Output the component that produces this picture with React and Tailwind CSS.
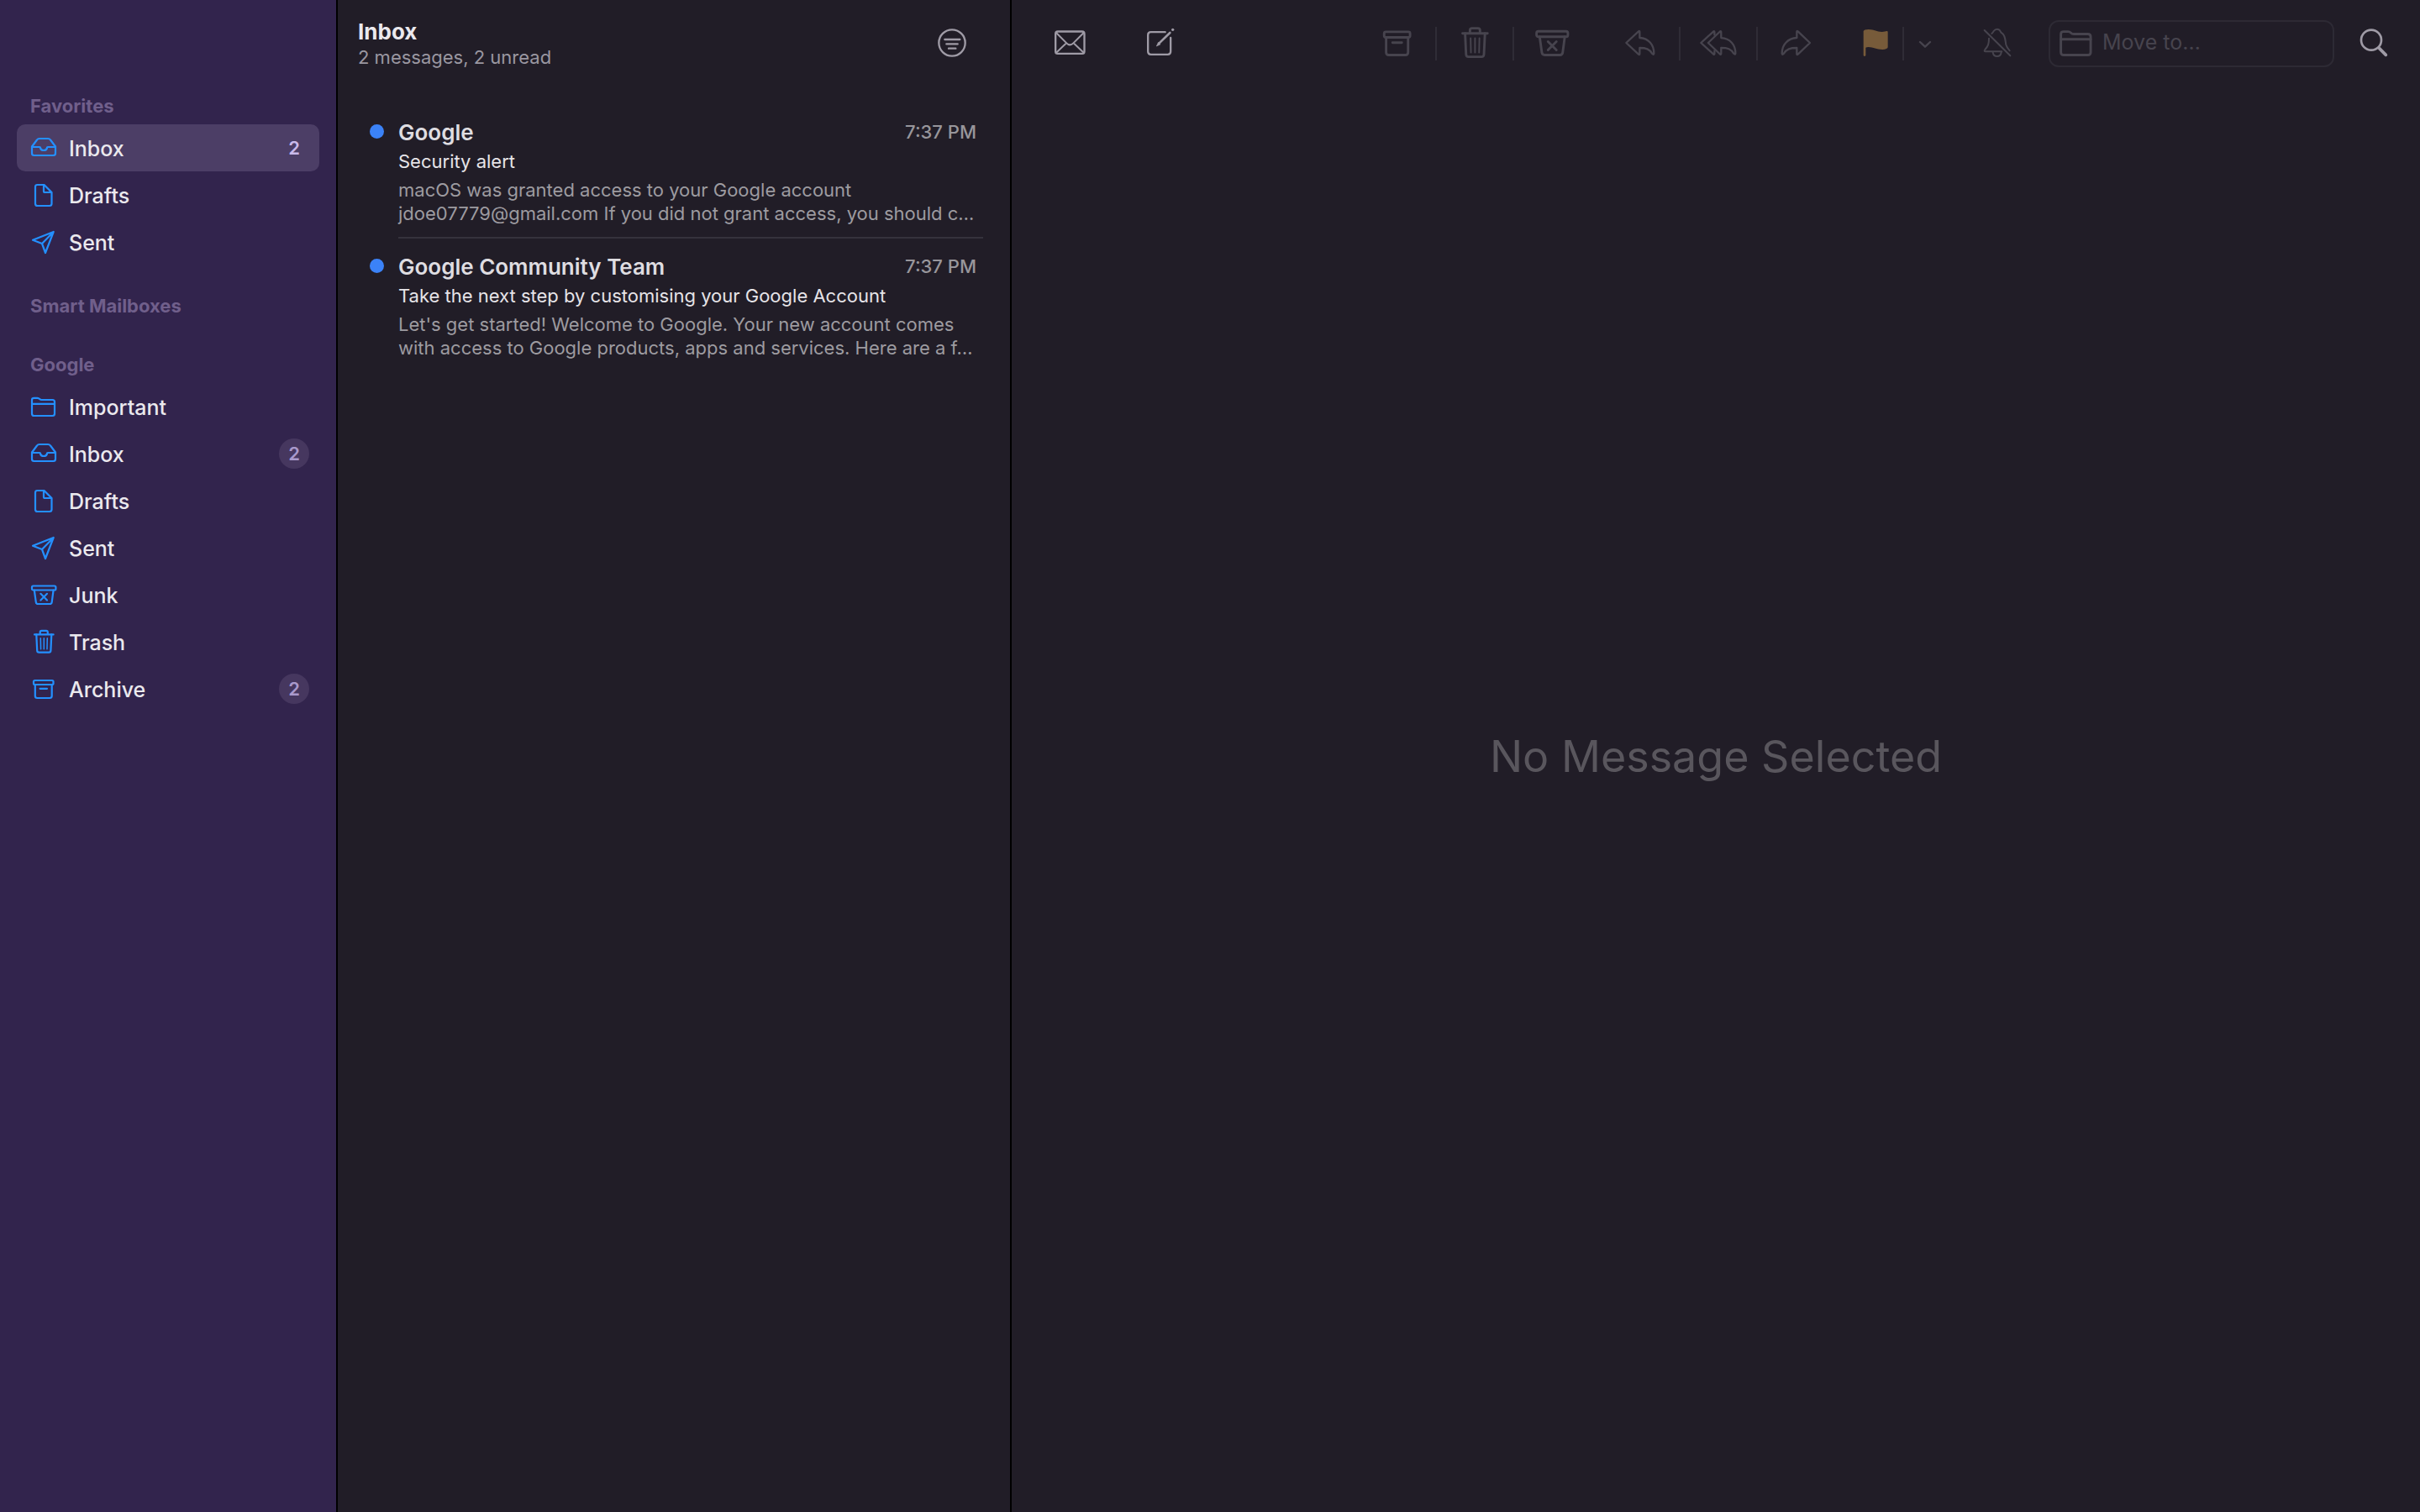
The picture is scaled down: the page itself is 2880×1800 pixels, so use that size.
import React from "react";

function SideIcon({ size = "size-8", children }) {
  return (
    <svg
      viewBox="0 0 32 32"
      className={`${size} shrink-0`}
      fill="none"
      stroke="currentColor"
      strokeWidth="2.2"
      strokeLinecap="round"
      strokeLinejoin="round"
      aria-hidden="true"
    >
      {children}
    </svg>
  );
}

const InboxIcon = (props) => (
  <SideIcon {...props}>
    <path d="M2 15V22.5Q2 25 4.5 25H27.5Q30 25 30 22.5V14.5L24 6.5Q23 5 21 5H11Q9 5 8 6.5L2 14.5Z" />
    <path d="M2 15H11Q12 15 12 16Q12.5 19 16 19Q19.5 19 20 16Q20 15 21 15H30" />
  </SideIcon>
);

const FileIcon = (props) => (
  <SideIcon {...props}>
    <path d="M8.5 4H16.5L25.5 13V26.5Q25.5 29 23 29H8.5Q6 29 6 26.5V6.5Q6 4 8.5 4Z" />
    <path d="M16 4V11.5Q16 13 17.5 13H25" />
  </SideIcon>
);

const PlaneIcon = (props) => (
  <SideIcon {...props}>
    <path d="M27.7 4L3 13.7L14 18L18 29L27.7 4L14 18" />
  </SideIcon>
);

const FolderIcon = (props) => (
  <SideIcon {...props}>
    <path d="M2 24.5V8Q2 5.8 4.5 5.8H8.5Q10 5.8 11.2 7Q12.2 8 13.5 8H26.5Q29 8 29 10.5V24.5Q29 27 26.5 27H4.5Q2 27 2 24.5Z" />
    <path d="M2 12.8H29" />
  </SideIcon>
);

const JunkIcon = (props) => (
  <SideIcon {...props}>
    <rect x="2" y="5.5" width="28.4" height="5" rx="1.6" />
    <path d="M4.8 10.5L6.8 24.8Q7.1 27 9.3 27H23.2Q25.4 27 25.7 24.8L27.6 10.5" />
    <path d="M12.4 14.8L20 22.5M20 14.8L12.4 22.5" />
  </SideIcon>
);

const TrashIcon = (props) => (
  <SideIcon {...props}>
    <path d="M11.7 7V4.6Q11.7 2.8 13.5 2.8H19Q20.8 2.8 20.8 4.6V7" />
    <path d="M5 7.4H27.6" />
    <path d="M7.3 7.4L8.2 26.5Q8.3 28.7 10.4 28.7H22.2Q24.3 28.7 24.4 26.5L25.3 7.4" />
    <path strokeWidth="1.5" d="M12.3 11.8L12.6 24.8M16.3 11.8V24.8M20.3 11.8L20 24.8" />
  </SideIcon>
);

const ArchiveIcon = (props) => (
  <SideIcon {...props}>
    <rect x="4" y="6" width="23.5" height="5" rx="1.5" />
    <path d="M5.8 11V24.5Q5.8 27 8.3 27H23.2Q25.7 27 25.7 24.5V11" />
    <path d="M11.6 15.8H20" />
  </SideIcon>
);

function BarIcon({ viewBox, size = "size-11", children }) {
  return (
    <svg
      viewBox={viewBox}
      className={`${size} shrink-0`}
      fill="none"
      stroke="currentColor"
      strokeWidth="7"
      strokeLinecap="round"
      strokeLinejoin="round"
      aria-hidden="true"
    >
      {children}
    </svg>
  );
}

const FilterIcon = () => (
  <BarIcon viewBox="332 87 132 132">
    <circle cx="398" cy="153" r="47" />
    <path d="M372 141H426M378 157H418M386 173H411" />
  </BarIcon>
);

const MailIcon = () => (
  <BarIcon viewBox="756 87 132 132">
    <rect x="768.5" y="112.5" width="103" height="79" rx="8" />
    <path strokeWidth="6" d="M771 117L808 154Q820 166 832 154L869 117M771 188L804 157M869 188L836 157" />
  </BarIcon>
);

const ComposeIcon = () => (
  <BarIcon viewBox="1080 87 132 132">
    <path d="M1160 114.500H1109Q1098.500 114.500 1098.500 125V184Q1098.500 194.500 1109 194.500H1169Q1179.500 194.500 1179.500 184V135" />
    <path strokeWidth="8" d="M1138 155L1177 117" />
    <path fill="currentColor" strokeWidth="2" d="M1135 152L1129 165L1142 159Z" />
    <circle cx="1187" cy="106" r="5" fill="currentColor" stroke="none" />
  </BarIcon>
);

const ReplyIcon = () => (
  <BarIcon viewBox="992 87 132 132">
    <path d="M1005 153L1049 112Q1053 109 1053 114V135C1086 137 1104 160 1104 191Q1103 197 1098 192C1088 175 1076 171 1053 171V192Q1053 197 1049 194Z" />
  </BarIcon>
);

const ReplyAllIcon = () => (
  <BarIcon viewBox="68 87 134 132">
    <path d="M98 153L141 112Q145 109 145 114V135C178 137 197 160 197 191Q196 197 191 192C181 175 168 171 145 171V192Q145 197 141 194Z" />
    <path d="M121 124V114Q121 109 117 112L72 153L117 194Q121 197 121 192V182" />
  </BarIcon>
);

const ForwardIcon = () => (
  <BarIcon viewBox="346 87 132 132">
    <path d="M463 153L420 112Q416 109 416 114V135C383 137 363 160 363 191Q364 197 369 192C379 175 393 171 416 171V192Q416 197 420 194Z" />
  </BarIcon>
);

const FlagIcon = () => (
  <BarIcon viewBox="628 87 132 132">
    <path
      fill="currentColor"
      stroke="none"
      d="M654 111Q656 105 672 105C695 105 700 114 720 114Q732 113 737 111Q741 110 741 115V169Q740 176 722 177C700 177 690 168 672 168Q665 168 662 170V198Q658 204 654 198Z"
    />
  </BarIcon>
);

const ChevronIcon = () => (
  <BarIcon viewBox="840 120 66 66" size="size-[22px]">
    <path d="M855 150L873 167L891 150" />
  </BarIcon>
);

const BellOffIcon = () => (
  <BarIcon viewBox="1066 87 132 132">
    <g strokeWidth="6">
      <path d="M1086 108L1178 199" />
      <path d="M1112 120Q1117 116 1119 111Q1124 104 1131 104Q1139 104 1143 112Q1145 117 1149 119C1162 128 1160 147 1163 160Q1166 170 1176 181" />
      <path d="M1102 137C1102 158 1099 165 1088 177Q1083 184 1090 184H1148" />
      <path d="M1116 187Q1118 201 1131 201Q1144 201 1146 187" />
    </g>
  </BarIcon>
);

const SearchIcon = () => (
  <BarIcon viewBox="1149 87 132 132">
    <circle cx="1206" cy="143" r="36" strokeWidth="8" />
    <path strokeWidth="11" d="M1235 173L1258 196" />
  </BarIcon>
);

function MailboxRow({ icon: Icon, label, count, selected }) {
  return (
    <li>
      <button
        type="button"
        aria-current={selected ? "page" : undefined}
        className={`flex h-14 w-full items-center rounded-[10px] pl-4 pr-3 text-left ${
          selected ? "bg-[#4c3e66]" : ""
        }`}
      >
        <span className="text-[#2490ff]">
          <Icon />
        </span>
        <span className="ml-[14px] flex-1 pt-[2px] text-[25px] font-medium leading-8 text-[#ebe9ee]">{label}</span>
        {count && (
          <span
            className={`flex size-9 items-center justify-center rounded-full text-[22px] font-semibold ${
              selected ? "text-[#c9b9ea]" : "bg-[#46375f] text-[#a999cb]"
            }`}
          >
            {count}
          </span>
        )}
      </button>
    </li>
  );
}

function MailboxSection({ title, items = [] }) {
  return (
    <section>
      <h2 className="flex h-11 items-center pl-4 text-[22px] font-bold text-[#705f8b]">{title}</h2>
      {items.length > 0 && (
        <ul>
          {items.map((item) => (
            <MailboxRow key={item.label} {...item} />
          ))}
        </ul>
      )}
    </section>
  );
}

const favorites = [
  { icon: InboxIcon, label: "Inbox", count: 2, selected: true },
  { icon: FileIcon, label: "Drafts" },
  { icon: PlaneIcon, label: "Sent" },
];

const google = [
  { icon: FolderIcon, label: "Important" },
  { icon: InboxIcon, label: "Inbox", count: 2 },
  { icon: FileIcon, label: "Drafts" },
  { icon: PlaneIcon, label: "Sent" },
  { icon: JunkIcon, label: "Junk" },
  { icon: TrashIcon, label: "Trash" },
  { icon: ArchiveIcon, label: "Archive", count: 2 },
];

const messages = [
  {
    from: "Google",
    time: "7:37 PM",
    subject: "Security alert",
    preview: [
      "macOS was granted access to your Google account",
      "jdoe07779@gmail.com If you did not grant access, you should c…",
    ],
  },
  {
    from: "Google Community Team",
    time: "7:37 PM",
    subject: "Take the next step by customising your Google Account",
    preview: [
      "Let's get started! Welcome to Google. Your new account comes",
      "with access to Google products, apps and services. Here are a f…",
    ],
  },
];

function Message({ from, time, subject, preview, last }) {
  return (
    <li className="flex pl-[38px] pr-8">
      <span className="mt-6 size-[17px] shrink-0 rounded-full bg-[#3b82f7]" aria-label="Unread" />
      <article
        className={`ml-[17px] min-w-0 flex-1 border-b-2 pb-[14px] pt-4 ${
          last ? "border-transparent" : "border-[#35323c]"
        }`}
      >
        <div className="flex h-[34px] items-center justify-between pr-2">
          <h3 className="text-[26px] font-semibold text-[#dfdde1]">{from}</h3>
          <time className="text-[22px] font-medium text-[#98969b]">{time}</time>
        </div>
        <p className="whitespace-nowrap text-[22px] leading-9 text-[#e6e4e8]">{subject}</p>
        <p className="whitespace-nowrap pt-[2px] text-[22px] leading-7 text-[#9d9ba0]">
          {preview[0]}
          <br />
          {preview[1]}
        </p>
      </article>
    </li>
  );
}

function ToolButton({ label, width = "w-[90px]", color = "text-[#47444e]", disabled = true, children }) {
  return (
    <button
      type="button"
      aria-label={label}
      disabled={disabled}
      className={`flex h-14 items-center justify-center pb-[2px] ${width} ${color}`}
    >
      {children}
    </button>
  );
}

const Separator = () => <span className="h-10 w-[2px] bg-[#2f2c36]" />;

export default function App() {
  return (
    <div className="flex min-h-screen bg-[#211d27] font-['Inter',sans-serif]">
      <nav
        aria-label="Mailboxes"
        className="flex w-[402px] shrink-0 flex-col gap-[26px] border-r-2 border-black bg-[#32244d] px-5 pt-[104px]"
      >
        <MailboxSection title="Favorites" items={favorites} />
        <MailboxSection title="Smart Mailboxes" />
        <MailboxSection title="Google" items={google} />
      </nav>

      <section aria-label="Messages" className="w-[802px] shrink-0 border-r-2 border-black">
        <header className="flex h-[104px] items-center justify-between pl-6 pr-8">
          <div>
            <h1 className="text-[26px] font-bold leading-8 text-[#ebe9ee]">Inbox</h1>
            <p className="text-[22px] leading-7 text-[#9a97a1]">2 messages, 2 unread</p>
          </div>
          <ToolButton label="Filter" width="w-[74px]" color="text-[#9f9ba6]" disabled={false}>
            <FilterIcon />
          </ToolButton>
        </header>
        <ul className="pt-5">
          {messages.map((message, index) => (
            <Message key={message.from} {...message} last={index === messages.length - 1} />
          ))}
        </ul>
      </section>

      <main className="flex min-w-0 flex-1 flex-col">
        <div role="toolbar" aria-label="Message actions" className="flex h-[104px] items-center justify-between pl-6 pr-2">
          <div className="flex gap-4">
            <ToolButton label="Get new mail" width="w-[92px]" color="text-[#9f9ba6]" disabled={false}>
              <MailIcon />
            </ToolButton>
            <ToolButton label="New message" width="w-[92px]" color="text-[#9f9ba6]" disabled={false}>
              <ComposeIcon />
            </ToolButton>
          </div>
          <div className="flex items-center">
            <div className="flex items-center gap-4">
              <div className="flex items-center">
                <ToolButton label="Archive"><ArchiveIcon size="size-[42px]" /></ToolButton>
                <Separator />
                <ToolButton label="Delete"><TrashIcon size="size-[42px]" /></ToolButton>
                <Separator />
                <ToolButton label="Junk"><JunkIcon size="size-[42px]" /></ToolButton>
              </div>
              <div className="flex items-center">
                <ToolButton label="Reply"><ReplyIcon /></ToolButton>
                <Separator />
                <ToolButton label="Reply all"><ReplyAllIcon /></ToolButton>
                <Separator />
                <ToolButton label="Forward"><ForwardIcon /></ToolButton>
              </div>
              <div className="flex items-center">
                <ToolButton label="Flag" width="w-[66px]" color="text-[#775b3a]"><FlagIcon /></ToolButton>
                <Separator />
                <ToolButton label="Flag options" width="w-[50px]"><ChevronIcon /></ToolButton>
              </div>
              <ToolButton label="Mute"><BellOffIcon /></ToolButton>
              <label className="flex h-14 w-[340px] items-center rounded-xl border-2 border-[#2d2a34] pb-[2px] pl-[10px] text-[#47444e]">
                <FolderIcon size="size-[42px]" />
                <input
                  type="text"
                  disabled
                  aria-label="Move to"
                  placeholder="Move to…"
                  className="ml-[10px] w-0 min-w-0 flex-1 bg-transparent text-[25px] placeholder:text-[#47444e]"
                />
              </label>
            </div>
            <ToolButton label="Search" width="w-[94px]" color="text-[#9f9ba6]" disabled={false}>
              <SearchIcon />
            </ToolButton>
          </div>
        </div>
        <div className="flex flex-1 items-center justify-center pb-[102px]">
          <p className="text-[52px] text-[#59565d]">No Message Selected</p>
        </div>
      </main>
    </div>
  );
}
